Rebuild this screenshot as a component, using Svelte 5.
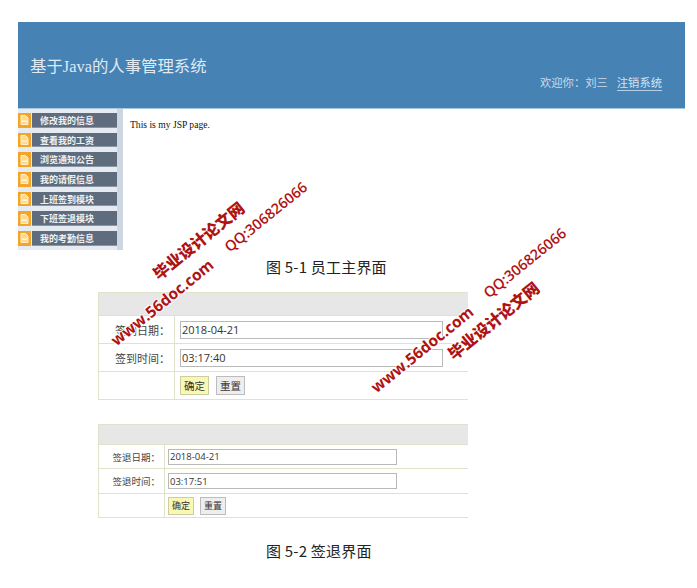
<script>
  const menu = ['修改我的信息', '查看我的工资', '浏览通知公告', '我的请假信息', '上班签到模块', '下班签退模块', '我的考勤信息'];
</script>

<div class="page">
  <header class="top">
    <h1>基于Java的人事管理系统</h1>
    <div class="user">欢迎你：刘三<a href="#logout">注销系统</a></div>
  </header>

  <section class="main">
    <nav class="side">
      {#each menu as item}
        <div class="item">
          <span class="ico">
            <svg width="9" height="10" viewBox="0 0 9 10"><path d="M1 .5h4.5L8 3v6.5H1z" fill="#ffd98a" stroke="#fff0c8" stroke-width="1"/><path d="M2 5.5h5v1.5H2z" fill="#fff6e0"/></svg>
          </span>
          <span class="label">{item}</span>
        </div>
      {/each}
    </nav>
    <p class="jsp">This is my JSP page.</p>
  </section>

  <p class="cap first">图 5-1 员工主界面</p>

  <div class="form big">
    <div class="head"></div>
    <div class="lab">签到日期：</div>
    <div class="val"><input value="2018-04-21" /></div>
    <div class="lab">签到时间：</div>
    <div class="val"><input value="03:17:40" /></div>
    <div class="lab"></div>
    <div class="val btns"><button class="ok">确定</button><button>重置</button></div>
  </div>

  <div class="form small">
    <div class="head"></div>
    <div class="lab">签退日期：</div>
    <div class="val"><input value="2018-04-21" /></div>
    <div class="lab">签退时间：</div>
    <div class="val"><input value="03:17:51" /></div>
    <div class="lab"></div>
    <div class="val btns"><button class="ok">确定</button><button>重置</button></div>
  </div>

  <p class="cap second">图 5-2 签退界面</p>

  <span class="wm cn a1">毕业设计论文网</span>
  <span class="wm url a2">www.56doc.com</span>
  <span class="wm qq a3">QQ:306826066</span>
  <span class="wm cn b1">毕业设计论文网</span>
  <span class="wm url b2">www.56doc.com</span>
  <span class="wm qq b3">QQ:306826066</span>
</div>

<style>
  :global(body) { margin: 0; background: #fff; }
  .page {
    position: relative;
    width: 697px;
    height: 588px;
    padding-top: 22px;
    box-sizing: border-box;
    overflow: hidden;
    font-family: "Liberation Serif", "Noto Sans CJK SC", serif;
  }
  .top {
    margin-left: 18px;
    width: 667px;
    height: 86px;
    background: #4682b4;
    border-bottom: 1px solid #a9c9e0;
    display: flex;
    justify-content: space-between;
    align-items: flex-start;
  }
  h1 {
    margin: 35px 0 0 12px;
    font-size: 16.4px;
    line-height: 20px;
    font-weight: 400;
    color: #dfeaf3;
  }
  .user {
    margin: 52px 23px 0 0;
    font-family: "Noto Sans CJK SC", sans-serif;
    font-size: 11.3px;
    line-height: 16px;
    color: #c9dbea;
  }
  .user a { margin-left: 9px; color: #d5e4f0; text-decoration: none; border-bottom: 1px solid #b5d0e6; }
  .main { display: flex; margin-left: 18px; height: 141px; }
  .side {
    width: 105px;
    height: 141px;
    box-sizing: border-box;
    padding-top: 4px;
    background: #e6ebf1;
    border-right: 6px solid #cdd7e1;
    display: flex;
    flex-direction: column;
    gap: 5px;
  }
  .item { display: flex; height: 14.67px; gap: 1px; }
  .ico {
    width: 13px;
    background: #f5a42a;
    display: flex;
    align-items: center;
    justify-content: center;
  }
  .label {
    flex: 1;
    background: #5f6c7d;
    border-bottom: 1px solid #8b97a6;
    box-sizing: border-box;
    padding-left: 8px;
    color: #eef1f4;
    font-family: "Noto Sans CJK SC", sans-serif;
    font-size: 9px;
    font-weight: 700;
    line-height: 15.5px;
  }
  .jsp { margin: 10px 0 0 7px; font-size: 9.6px; line-height: 12px; color: #111; }
  .cap {
    margin: 0;
    font-family: "Noto Sans CJK SC", sans-serif;
    font-size: 15px;
    line-height: 20px;
    font-weight: 400;
    letter-spacing: 0.2px;
    color: #222;
  }
  .first { margin: 7px 0 15px 266px; }
  .second { margin: 23px 0 0 266px; }
  .form {
    margin-left: 98px;
    width: 370px;
    display: grid;
    font-family: "Open Sans", "Noto Sans CJK SC", sans-serif;
    color: #444;
    border-top: 1px solid #dfe3cc;
    box-sizing: border-box;
  }
  .big { grid-template-columns: 77px 1fr; grid-template-rows: 23px 28px 28px 28px; font-size: 11px; margin-bottom: 24px; }
  .small { grid-template-columns: 67px 1fr; grid-template-rows: 20px 24px 25px 24px; font-size: 9.5px; }
  .head { grid-column: 1 / -1; background: #e7e7e7; border-left: 1px solid #dfe3cc; border-bottom: 1px solid #dfe3cc; }
  .lab {
    border-left: 1px solid #dfe3cc;
    border-right: 1px solid #dfe3cc;
    border-bottom: 1px solid #dfe3cc;
    display: flex;
    align-items: center;
    justify-content: flex-end;
    padding-right: 4px;
    font-family: "Noto Sans CJK SC", sans-serif;
  }
  .val { border-bottom: 1px solid #dfe3cc; display: flex; align-items: center; }
  input {
    box-sizing: border-box;
    border: 1px solid #b9b9b9;
    padding: 0 1px;
    background: #fff;
    color: #333;
    font-family: "Open Sans", sans-serif;
  }
  .big input { margin-left: 5px; width: 263px; height: 18px; font-size: 11px; }
  .small input { margin-left: 3px; width: 229px; height: 16px; font-size: 9.5px; }
  .btns { gap: 7px; }
  .big .btns { padding-left: 5px; }
  .small .btns { padding-left: 3px; gap: 6px; }
  button {
    box-sizing: border-box;
    padding: 0;
    background: #eeeeee;
    border: 1px solid #bcbcbc;
    color: #333;
    font-family: "Noto Sans CJK SC", sans-serif;
  }
  button.ok { background: #f8f8b4; border-color: #cdcda0; }
  .big button { width: 29px; height: 19px; font-size: 10.5px; }
  .small button { width: 26px; height: 18px; font-size: 9px; }
  .wm {
    position: absolute;
    white-space: nowrap;
    color: #b01212;
    font-weight: 700;
    transform: translate(-50%, -50%) rotate(-39deg);
    text-shadow: 1px 0 1px #fff, -1px 0 1px #fff, 0 1px 1px #fff, 0 -1px 1px #fff;
  }
  .cn { font-family: "Noto Sans CJK SC", sans-serif; font-weight: 900; font-size: 16px; line-height: 18px; }
  .url { font-family: "Open Sans", sans-serif; font-size: 15.5px; line-height: 18px; }
  .qq { font-family: "Open Sans", sans-serif; font-size: 14.5px; line-height: 16px; font-weight: 600; }
  .a1 { left: 198px; top: 240px; }
  .a2 { left: 162px; top: 302px; }
  .a3 { left: 266px; top: 217px; }
  .b1 { left: 493px; top: 320px; }
  .b2 { left: 422px; top: 349px; }
  .b3 { left: 525px; top: 263px; }
</style>
